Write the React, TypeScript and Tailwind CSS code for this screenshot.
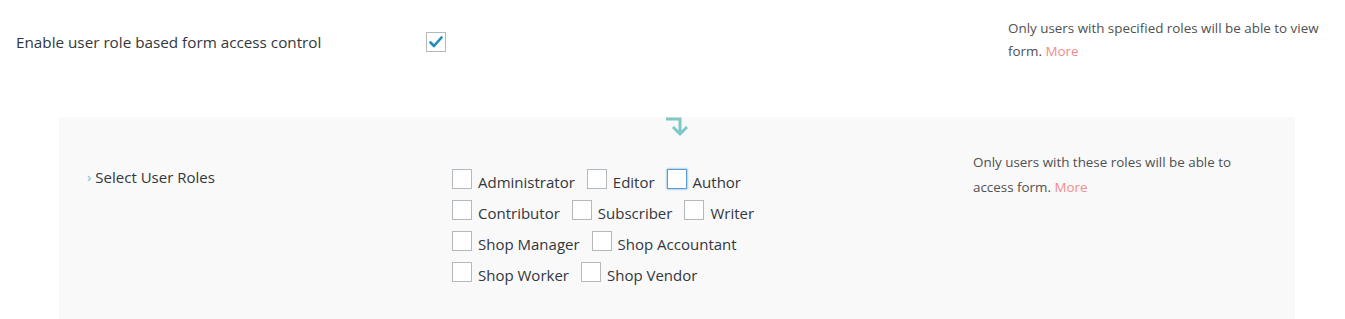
import React from "react";

const roles = [
  "Administrator",
  "Editor",
  "Author",
  "Contributor",
  "Subscriber",
  "Writer",
  "Shop Manager",
  "Shop Accountant",
  "Shop Worker",
  "Shop Vendor",
];

const font = { fontFamily: '"Segoe UI", "Open Sans", "Noto Sans", sans-serif' };

function Box({ checked, focused }: { checked?: boolean; focused?: boolean }) {
  return (
    <span
      className={
        "flex h-5 w-5 shrink-0 items-center justify-center border bg-white " +
        (focused
          ? "border-[#5b9dd9] shadow-[0_0_2px_rgba(30,140,190,0.8)]"
          : "border-[#b4b9be]")
      }
    >
      {checked && (
        <svg width="16" height="16" viewBox="0 0 16 16">
          <path
            d="M2.5 8.5 L6 12 L13.5 3.5"
            fill="none"
            stroke="#1e8cbe"
            strokeWidth="2.6"
            strokeLinecap="round"
            strokeLinejoin="round"
          />
        </svg>
      )}
    </span>
  );
}

export default function App() {
  return (
    <div className="w-[1345px] h-[319px] overflow-hidden bg-white text-[#32373c]" style={font}>
      {/* Top setting row */}
      <div className="flex items-start pt-[17px]">
        <div className="w-[426px] pl-4 pt-[15px] text-[15.25px] leading-[20px]">
          Enable user role based form access control
        </div>
        <div className="pt-[15px]">
          <Box checked />
        </div>
        <div className="ml-[562px] w-[322px] text-[13.4px] leading-[23px] text-[#505050]">
          Only users with specified roles will be able to view form.{" "}
          <span className="text-[#f28b8b]">More</span>
        </div>
      </div>

      {/* Nested panel */}
      <div className="relative ml-[59px] mt-[54px] h-[210px] w-[1236px] bg-[#f9f9f9]">
        <svg
          className="absolute left-[605px] top-0"
          width="28"
          height="20"
          viewBox="0 0 28 20"
        >
          <path
            d="M2 2 H16 V17 M9 10 L16 17 L23 10"
            fill="none"
            stroke="#80c8c8"
            strokeWidth="3"
          />
        </svg>
        <div className="flex items-start pt-[50px]">
          <div className="flex w-[393px] items-center pl-[28px] text-[15px] leading-[20px]">
            <span className="mr-[4px] text-[13px] font-semibold text-[#8fc9d4]">›</span>
            Select User Roles
          </div>
          <div className="mt-[2px] flex w-[330px] flex-wrap gap-y-[8px]">
            {roles.map((r) => (
              <label key={r} className="mr-[12px] flex items-start gap-[6px] text-[15px] leading-[20px]">
                <Box focused={r === "Author"} />
                <span className="pt-[3px]">{r}</span>
              </label>
            ))}
          </div>
          <div className="ml-[191px] -mt-[17px] w-[292px] text-[13.4px] leading-[25px] text-[#505050]">
            Only users with these roles will be able to access form.{" "}
            <span className="text-[#f28b8b]">More</span>
          </div>
        </div>
      </div>
    </div>
  );
}
